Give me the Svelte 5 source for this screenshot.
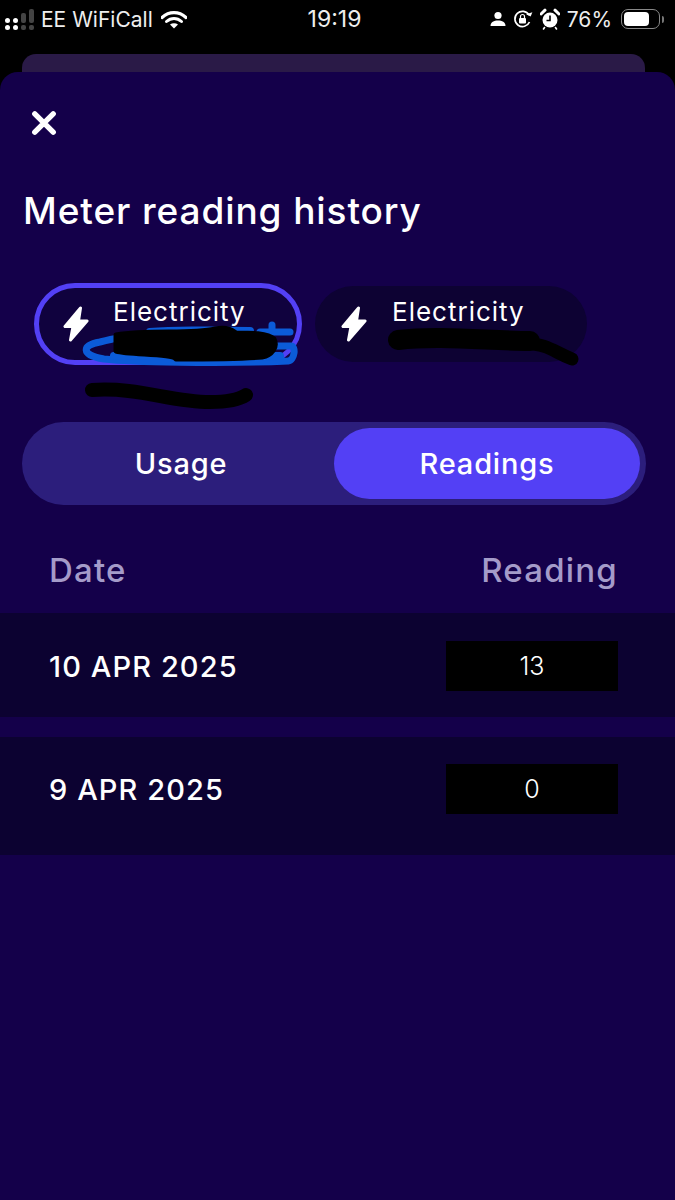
<script>
  const rows = [
    { date: '10 APR 2025', reading: '13' },
    { date: '9 APR 2025', reading: '0' }
  ];
  const signal = [1, 1, 0, 0];
  const bolt = 'M17.500 2 2 20.500H10L7.500 34 24 15H15.500Z';
</script>

<div class="screen">
  <header class="status">
    <div class="side">
      <div class="signal">
        {#each signal as on, i}
          <div class="bar">
            <i class:lit={on} class:tall={i > 1}></i>
            <i class:lit={on}></i>
          </div>
        {/each}
      </div>
      <span>EE WiFiCall</span>
      <svg class="wifi" viewBox="0 0 26 19" width="26" height="19">
        <path d="M1 7.500C8 1 18 1 25 7.500" fill="none" stroke="#fff" stroke-width="3.200" stroke-linecap="round" />
        <path d="M5.500 11.500C10 7.500 16 7.500 20.500 11.500" fill="none" stroke="#fff" stroke-width="3" stroke-linecap="round" />
        <path d="M13 18.500 9 14.500c2.400-1.700 5.600-1.700 8 0Z" fill="#fff" />
      </svg>
    </div>
    <span class="time">19:19</span>
    <div class="side right">
      <svg viewBox="0 0 16 16" width="16" height="16">
        <circle cx="8" cy="4.500" r="3.600" fill="#fff" />
        <path d="M.5 15c0-4 3.500-5.500 7.500-5.500s7.500 1.500 7.500 5.500Z" fill="#fff" />
      </svg>
      <svg viewBox="0 0 20 20" width="20" height="20">
        <path d="M16.500 13A7.600 7.600 0 1 1 16 6" fill="none" stroke="#fff" stroke-width="1.700" />
        <path d="M13.500 6.500h5l-.2-4.500Z" fill="#fff" transform="rotate(25 16 5)" />
        <rect x="6" y="9" width="7" height="5.500" rx="1" fill="#fff" />
        <path d="M7.500 9V7.500a2 2 0 0 1 4 0V9" fill="none" stroke="#fff" stroke-width="1.200" />
      </svg>
      <svg viewBox="0 0 20 22" width="20" height="22">
        <circle cx="10" cy="12" r="7.500" fill="#fff" />
        <path d="M10 7.500V12.500H6.500" fill="none" stroke="#000" stroke-width="1.600" />
        <path d="M1 6 5 2.200M19 6 15 2.200" stroke="#fff" stroke-width="3" stroke-linecap="round" />
        <path d="M4.500 19.500 3.500 21M15.500 19.500 16.500 21" stroke="#fff" stroke-width="1.600" stroke-linecap="round" />
      </svg>
      <span class="pct">76%</span>
      <div class="battery"><div class="level"></div></div>
      <div class="nub"></div>
    </div>
  </header>

  <div class="peek-wrap"><div class="peek"></div></div>

  <main class="sheet">
    <button class="close" aria-label="Close">
      <svg viewBox="0 0 24 24" width="26" height="26">
        <path d="M3.500 3.500 20.500 20.500M20.500 3.500 3.500 20.500" stroke="#fff" stroke-width="5" stroke-linecap="round" />
      </svg>
    </button>

    <h1>Meter reading history</h1>

    <div class="meters">
      <div class="meter active">
        <svg viewBox="0 0 26 36" width="26" height="36"><path d={bolt} fill="#fff" stroke="#fff" stroke-width="3" stroke-linejoin="round" /></svg>
        <span>Electricity</span>
      </div>
      <div class="meter">
        <svg viewBox="0 0 26 36" width="26" height="36"><path d={bolt} fill="#fff" stroke="#fff" stroke-width="3" stroke-linejoin="round" /></svg>
        <span>Electricity</span>
      </div>

      <!-- hand-drawn redaction marks sitting on top of the cards -->
      <svg class="scribble" viewBox="0 0 600 135" width="600" height="135">
        <path d="M272 50V57M260 57H290M262 71H291C296 71 295 85 288 86C220 89 130 87 104 84C80 80 82 70 100 67C108 65 112 64 118 63" fill="none" stroke="#0b5bd8" stroke-width="7" stroke-linecap="round" stroke-linejoin="round" />
        <path d="M150 57C180 54 200 56 250 56M114 81C150 78 190 82 280 81" fill="none" stroke="#0b5bd8" stroke-width="8" stroke-linecap="round" />
        <path d="M116 60C150 54 190 60 215 54C228 52 232 55 236 58C250 58 268 58 274 64C278 72 272 80 262 82C240 84 200 84 176 84C172 78 130 80 116 76Z" fill="#000" stroke="#000" stroke-width="5" stroke-linejoin="round" />
        <path d="M92 115C140 112 170 127 210 127C228 127 240 124 246 120" fill="none" stroke="#000" stroke-width="14" stroke-linecap="round" />
        <path d="M398 65C440 60 490 66 530 66" fill="none" stroke="#000" stroke-width="20" stroke-linecap="round" />
        <path d="M525 68C550 70 552 76 572 84" fill="none" stroke="#000" stroke-width="13" stroke-linecap="round" />
      </svg>
    </div>

    <div class="tabs">
      <button class="tab usage">Usage</button>
      <button class="tab selected">Readings</button>
    </div>

    <div class="table-head">
      <span>Date</span>
      <span>Reading</span>
    </div>

    <div class="list">
      {#each rows as row}
        <div class="row">
          <span class="date">{row.date}</span>
          <span class="value">{row.reading}</span>
        </div>
      {/each}
    </div>
  </main>
</div>

<style>
  :global(body) {
    background: #000;
  }

  .screen {
    width: 675px;
    height: 1200px;
    display: flex;
    flex-direction: column;
    overflow: hidden;
    background: #000;
    color: #fff;
    font-family: Inter, "Open Sans", sans-serif;
  }

  .status {
    height: 38px;
    padding: 0 11px 0 5px;
    display: grid;
    grid-template-columns: 1fr auto 1fr;
    align-items: center;
    font-size: 21px;
    color: #eee;
  }

  .side {
    display: flex;
    align-items: center;
    gap: 7px;
  }

  .right {
    justify-content: flex-end;
    gap: 7px;
  }

  .signal {
    display: flex;
    align-items: flex-end;
    gap: 3px;
  }

  .bar {
    display: flex;
    flex-direction: column;
    gap: 2px;
  }

  .bar i {
    display: block;
    width: 5px;
    height: 5px;
    border-radius: 2px;
    background: #444;
  }

  .bar i.lit {
    background: #fff;
    border-radius: 50%;
  }

  .bar i.tall {
    height: 10px;
  }

  .bar:last-child i.tall {
    height: 14px;
  }

  .wifi {
    margin-left: 1px;
  }

  .time {
    font-size: 23px;
  }

  .pct {
    font-size: 21px;
    margin-right: 2px;
  }

  .battery {
    width: 39px;
    height: 20px;
    box-sizing: border-box;
    padding: 2px;
    border: 1.500px solid #888;
    border-radius: 7px;
  }

  .level {
    width: 76%;
    height: 100%;
    border-radius: 4px;
    background: #fff;
  }

  .nub {
    width: 2px;
    height: 7px;
    margin-left: -5px;
    border-radius: 0 2px 2px 0;
    background: #777;
  }

  .peek-wrap {
    padding: 16px 30px 0 22px;
  }

  .peek {
    height: 18px;
    border-radius: 14px 14px 0 0;
    background: #2a1a47;
  }

  .sheet {
    flex: 1;
    border-radius: 18px 18px 0 0;
    background: #14004a;
  }

  .close {
    display: block;
    margin: 38px 0 0 31px;
    padding: 0;
    height: 26px;
    border: 0;
    background: none;
  }

  h1 {
    margin: 52px 0 0 23px;
    font-size: 37px;
    line-height: 46px;
    font-weight: 500;
    letter-spacing: 0.9px;
  }

  .meters {
    position: relative;
    display: flex;
    align-items: center;
    gap: 13px;
    margin: 49px 0 0 34px;
  }

  .meter {
    width: 272px;
    height: 76px;
    box-sizing: border-box;
    padding: 0 0 26px 26px;
    display: flex;
    align-items: center;
    gap: 25px;
    border-radius: 38px;
    background: #0d0233;
    font-size: 26px;
    letter-spacing: 1px;
  }

  .meter svg {
    flex: none;
    margin-top: 26px;
  }

  .meter.active {
    width: 268px;
    height: 82px;
    padding-left: 24px;
    gap: 24px;
    border: 5px solid #5340f5;
    border-radius: 41px;
    background: #10023e;
  }

  .scribble {
    position: absolute;
    left: -34px;
    top: -8px;
    pointer-events: none;
  }

  .tabs {
    margin: 57px 29px 0 22px;
    height: 83px;
    box-sizing: border-box;
    padding: 6px 6px 6px 0;
    display: grid;
    grid-template-columns: 312px 1fr;
    border-radius: 42px;
    background: #2c1e7c;
  }

  .tab {
    padding: 0;
    border: 0;
    border-radius: 36px;
    background: none;
    color: #fff;
    font: inherit;
    font-size: 29px;
    font-weight: 500;
    letter-spacing: 0.8px;
  }

  .tab.usage {
    padding-left: 6px;
  }

  .tab.selected {
    background: #5340f5;
  }

  .table-head {
    display: flex;
    justify-content: space-between;
    padding: 45px 57px 0 49px;
    font-size: 33px;
    line-height: 40px;
    font-weight: 500;
    letter-spacing: 1.200px;
    color: #a49bc9;
  }

  .list {
    margin-top: 23px;
    display: flex;
    flex-direction: column;
    gap: 20px;
  }

  .row {
    display: flex;
    align-items: center;
    justify-content: space-between;
    padding: 2px 57px 0 49px;
    height: 104px;
    box-sizing: border-box;
    background: #0c0231;
  }

  .row:last-child {
    height: 118px;
    padding-bottom: 16px;
  }

  .date {
    font-size: 29px;
    font-weight: 500;
    letter-spacing: 1.100px;
  }

  .value {
    width: 172px;
    height: 50px;
    display: flex;
    align-items: center;
    justify-content: center;
    background: #000;
    font-size: 25px;
    font-weight: 300;
  }
</style>
